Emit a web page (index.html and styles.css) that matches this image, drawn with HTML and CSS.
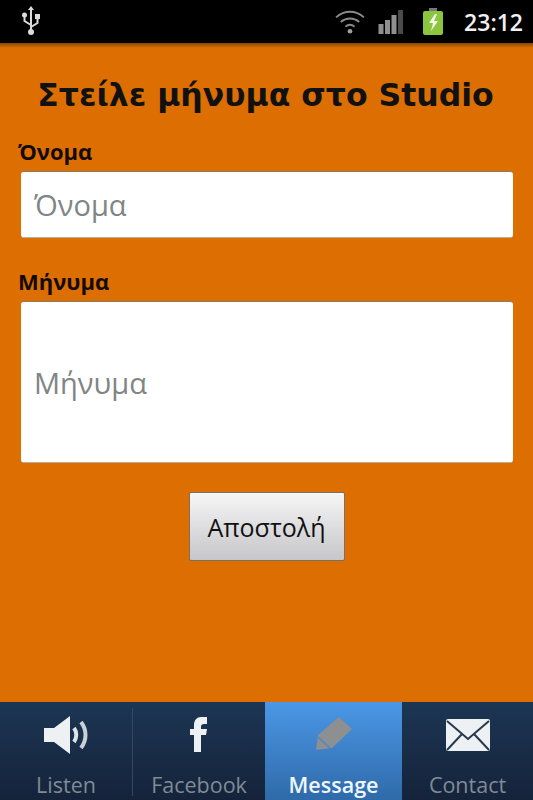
FILE: index.html
```html
<!DOCTYPE html>
<html lang="el">
  <head>
    <meta charset="UTF-8" />
    <meta name="viewport" content="width=device-width, initial-scale=1.0" />
    <title>Message</title>
    <link rel="stylesheet" href="styles.css">
  </head>
  <body>
    <header class="status-bar">
      <svg class="usb-icon" width="20" height="30" viewBox="0 0 20 30">
        <path d="M10 2v24M10 19l-6.500-4v-5M10 21l6.500-4v-5" fill="none" stroke="#dcdcdc" stroke-width="2"/>
        <path d="M10 0l3 4h-6z" fill="#dcdcdc"/>
        <circle cx="3.500" cy="9" r="2.500" fill="#dcdcdc"/>
        <rect x="14" y="8" width="5" height="5" fill="#dcdcdc"/>
        <circle cx="10" cy="26" r="3" fill="#dcdcdc"/>
      </svg>
      <div class="status-right">
        <svg class="wifi-icon" width="30" height="26" viewBox="0 0 32 28">
          <g fill="none" stroke="#8a8a8a" stroke-width="2">
            <path d="M1 9c9-8 21-8 30 0"/>
            <path d="M6 14c6-5 14-5 20 0"/>
            <path d="M11 19c3-2.500 7-2.500 10 0"/>
          </g>
          <circle cx="16" cy="24" r="2.500" fill="#a0a0a0"/>
        </svg>
        <svg class="signal-icon" width="26" height="24" viewBox="0 0 25 24">
          <rect x="0" y="14" width="5" height="10" fill="#8f8f8f"/>
          <rect x="6.500" y="10" width="5" height="14" fill="#8f8f8f"/>
          <rect x="13" y="5" width="5" height="19" fill="#8f8f8f"/>
          <rect x="19.500" y="0" width="5" height="24" fill="#4a4a4a"/>
        </svg>
        <svg class="battery-icon" width="20" height="27" viewBox="0 0 20 27">
          <rect x="6" y="0" width="8" height="3" fill="#777"/>
          <rect x="0" y="3" width="20" height="24" rx="2" fill="#8cc63f"/>
          <path d="M12 6l-6 9h4l-2 8 7-10h-4l3-7z" fill="#f4f8e0"/>
        </svg>
        <span class="clock">23:12</span>
      </div>
    </header>

    <main class="content">
      <h1 class="page-title">Στείλε μήνυμα στο Studio</h1>
      <form class="message-form">
        <label class="field-label" for="name">Όνομα</label>
        <input class="field" type="text" id="name" placeholder="Όνομα" autocomplete="off" />
        <label class="field-label label-message" for="message">Μήνυμα</label>
        <div class="field field-big">
          <input type="text" id="message" placeholder="Μήνυμα" autocomplete="off" />
        </div>
        <button class="send-button" type="button">Αποστολή</button>
      </form>
    </main>

    <nav class="tab-bar">
      <a class="tab tab-listen">
        <svg width="48" height="40" viewBox="0 0 48 40">
          <path d="M2 13h10L28 1v38L12 27H2z" fill="#eef1f3"/>
          <path d="M32 13c3 4 3 10 0 14" fill="none" stroke="#dfe4e8" stroke-width="4"/>
          <path d="M39 7c6 8 6 18 0 26" fill="none" stroke="#c9d0d6" stroke-width="4"/>
        </svg>
        <span>Listen</span>
      </a>
      <div class="tab-divider"></div>
      <a class="tab tab-facebook">
        <svg width="48" height="40" viewBox="0 0 48 40">
          <path d="M19 37V20h-4v-6h4v-4c0-5 3-8 7-8h6v7h-3c-2 0-3 1-3 2.500V14h6l-1 6h-5v17z" fill="#eef1f3"/>
        </svg>
        <span>Facebook</span>
      </a>
      <a class="tab tab-message active">
        <svg width="48" height="40" viewBox="0 0 48 40">
          <path d="M29 2l13 12-20 19-16 2 2-15z" fill="#8d8f90"/>
          <path d="M8 22l12 11" stroke="#4d87c4" stroke-width="1.500"/>
          <path d="M12 17l13 12" stroke="#7d97ad" stroke-width="1"/>
        </svg>
        <span>Message</span>
      </a>
      <a class="tab tab-contact">
        <svg width="48" height="40" viewBox="0 0 48 40">
          <rect x="2" y="4" width="44" height="32" rx="2" fill="#eef1f3"/>
          <path d="M3 6l21 18L45 6M3 35l15-16M45 35L30 19" fill="none" stroke="#27384c" stroke-width="2"/>
        </svg>
        <span>Contact</span>
      </a>
    </nav>
  </body>
</html>
```

FILE: styles.css
```css
* {
  box-sizing: border-box;
}
html,
body {
  height: 100%;
}
body {
  margin: 0;
  display: flex;
  flex-direction: column;
  background-color: #dd6f02;
  font-family: "Open Sans", sans-serif;
  overflow: hidden;
}
.status-bar {
  height: 43px;
  flex: none;
  background-color: #000;
  display: flex;
  align-items: center;
  justify-content: space-between;
  padding: 0 10px 0 21px;
}
.status-bar svg,
.tab svg {
  filter: blur(0.5px);
}
.usb-icon {
  margin-bottom: 2px;
}
.status-right {
  display: flex;
  align-items: center;
}
.signal-icon {
  margin-left: 13px;
}
.battery-icon {
  margin-left: 19px;
}
.clock {
  margin-left: 21px;
  color: #f0f0f0;
  font-size: 23px;
  font-weight: 600;
}
.content {
  flex: 1;
  padding: 30px 20px 0 18px;
  background: linear-gradient(#8a4600, #dd6f02 5px);
}
.page-title {
  margin: 0;
  color: #111;
  font-family: "DejaVu Sans", sans-serif;
  font-size: 31.5px;
  line-height: 44px;
  font-weight: bold;
  text-align: center;
}
.message-form {
  display: flex;
  flex-direction: column;
  margin-top: 20px;
}
.field-label {
  color: #140b00;
  font-size: 22px;
  font-weight: bold;
  line-height: 28px;
}
.label-message {
  margin-top: 29px;
}
.field {
  margin: 6px 0 0 3px;
  height: 67px;
  padding: 0 13px;
  border: none;
  border-top: 1px solid #8b7a62;
  border-bottom: 1px solid #b9ae9c;
  border-radius: 3px;
  background-color: #fff;
  font-family: "Open Sans", sans-serif;
  font-size: 29px;
  outline: none;
}
.field::placeholder,
.field-big input::placeholder {
  color: #808585;
}
.field-big {
  height: 162px;
  display: flex;
  align-items: center;
}
.field-big input {
  width: 100%;
  border: none;
  outline: none;
  padding: 0;
  font-family: "Open Sans", sans-serif;
  font-size: 29px;
}
.send-button {
  align-self: center;
  width: 156px;
  height: 69px;
  margin: 29px 0 0 2px;
  border: 1px solid #7d6f5f;
  border-radius: 2px;
  background: linear-gradient(#f6f6f6, #c6c6ca);
  color: #111;
  font-family: "Open Sans", sans-serif;
  font-size: 25px;
}
.tab-bar {
  height: 98px;
  flex: none;
  display: flex;
  background: linear-gradient(#1c3654, #15233a);
}
.tab {
  display: flex;
  flex-direction: column;
  align-items: center;
  padding-top: 13px;
  color: #7f8b96;
  font-size: 21.5px;
  line-height: 30px;
  font-weight: 500;
}
.tab svg {
  margin-bottom: 15px;
}
.tab-listen {
  width: 132px;
}
.tab-divider {
  width: 1px;
  margin: 6px 0 4px;
  background-color: #32495f;
}
.tab-facebook {
  width: 132px;
}
.tab-message {
  width: 137px;
}
.tab-contact {
  width: 131px;
}
.tab.active {
  background: linear-gradient(#4b97e6, #2f6aa9);
  color: #eef6fc;
  font-weight: 600;
}
```
